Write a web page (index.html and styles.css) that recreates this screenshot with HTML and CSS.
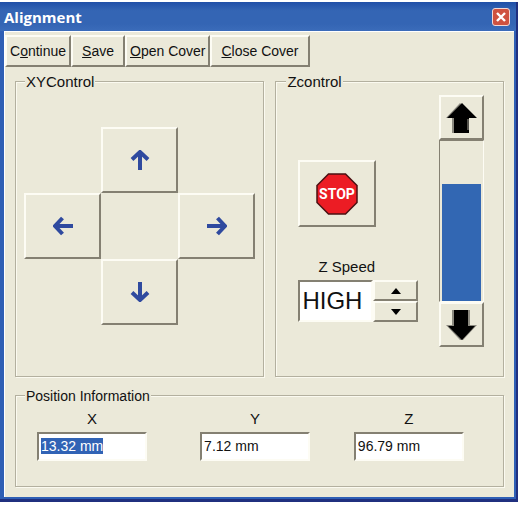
FILE: index.html
```html
<!DOCTYPE html>
<html lang="en">
<head>
    <meta charset="UTF-8">
    <meta name="viewport" content="width=device-width, initial-scale=1.0">
    <title>Alignment</title>
    <link rel="stylesheet" href="styles.css">
</head>
<body>
    <div class="window">
        <div class="titlebar">
            <h1>Alignment</h1>
            <button class="close" aria-label="Close">
                <svg width="10" height="10" viewBox="0 0 10 10"><path d="M1 1L9 9M9 1L1 9" stroke="#fff" stroke-width="2.4"/></svg>
            </button>
        </div>

        <div class="client">
            <div class="toolbar">
                <button class="raised">C<u>o</u>ntinue</button>
                <button class="raised wide"><u>S</u>ave</button>
                <button class="raised"><u>O</u>pen Cover</button>
                <button class="raised wide"><u>C</u>lose Cover</button>
            </div>

            <div class="controls">
                <fieldset class="xy">
                    <legend>XYControl</legend>
                    <div class="pad">
                        <button class="raised up" aria-label="Up">
                            <svg class="arrow" viewBox="0 0 20 20"><path d="M10 20V3M2 9.500L10 2L18 9.500"/></svg>
                        </button>
                        <button class="raised left" aria-label="Left">
                            <svg class="arrow" viewBox="0 0 20 20"><path d="M20 10H3M9.500 2L2 10L9.500 18"/></svg>
                        </button>
                        <button class="raised right" aria-label="Right">
                            <svg class="arrow" viewBox="0 0 20 20"><path d="M0 10H17M10.500 2L18 10L10.500 18"/></svg>
                        </button>
                        <button class="raised down" aria-label="Down">
                            <svg class="arrow" viewBox="0 0 20 20"><path d="M10 0V17M2 10.500L10 18L18 10.500"/></svg>
                        </button>
                    </div>
                </fieldset>

                <fieldset class="z">
                    <legend>Zcontrol</legend>
                    <div class="z-left">
                        <button class="raised stop" aria-label="Stop">
                            <svg width="42" height="42" viewBox="0 0 42 42">
                                <path d="M12.500 1H29.500L41 12.500V29.500L29.500 41H12.500L1 29.500V12.500Z" fill="#ec1c24" stroke="#4a1012" stroke-width="1.500"/>
                                <text class="stop-text" x="21" y="26" text-anchor="middle">STOP</text>
                            </svg>
                        </button>
                        <label for="speed">Z Speed</label>
                        <div class="spinner">
                            <input type="text" id="speed" value="HIGH">
                            <div class="spin-buttons">
                                <button class="raised" aria-label="Faster">
                                    <svg width="10" height="6" viewBox="0 0 10 6"><path d="M5 0L10 6H0Z"/></svg>
                                </button>
                                <button class="raised" aria-label="Slower">
                                    <svg width="10" height="6" viewBox="0 0 10 6"><path d="M0 0H10L5 6Z"/></svg>
                                </button>
                            </div>
                        </div>
                    </div>
                    <div class="z-right">
                        <button class="raised" aria-label="Z up">
                            <svg width="32" height="32" viewBox="0 0 32 32">
                                <path d="M14 1L0 16H6V31H22V16H30Z" fill="#8c8a80"/>
                                <path d="M16 1L1 16H8V31H23V16H31Z"/>
                                <path d="M22 17V28" stroke="#aaa89c"/>
                            </svg>
                        </button>
                        <div class="track" role="meter" aria-label="Z position" aria-valuemin="0" aria-valuemax="100" aria-valuenow="73">
                            <div class="level" style="height: 73%"></div>
                        </div>
                        <button class="raised" aria-label="Z down">
                            <svg width="32" height="32" viewBox="0 0 32 32">
                                <path d="M6 1H24V16H31L17 31H14L0 16H6Z" fill="#8c8a80"/>
                                <path d="M8 1H22V17H29L16 31L2 17H8Z"/>
                            </svg>
                        </button>
                    </div>
                </fieldset>
            </div>

            <fieldset class="position">
                <legend>Position Information</legend>
                <div class="field">
                    <label for="pos_x">X</label>
                    <input type="text" id="pos_x" value="13.32 mm">
                </div>
                <div class="field">
                    <label for="pos_y">Y</label>
                    <input type="text" id="pos_y" value="7.12 mm">
                </div>
                <div class="field">
                    <label for="pos_z">Z</label>
                    <input type="text" id="pos_z" value="96.79 mm">
                </div>
            </fieldset>
        </div>
    </div>

    <script>
        // start with the X position ready to be overwritten
        let posX = document.getElementById("pos_x");
        posX.focus();
        posX.select();
    </script>
</body>
</html>
```
FILE: styles.css
```css
* {
    box-sizing: border-box;
}
body {
    margin: 0;
    padding: 2px 4px 4px 0;
    background-color: #fff;
    font-family: "Liberation Sans", Arial, sans-serif;
    font-size: 14px;
    line-height: 18px;
    color: #111;
}
button, input {
    font: inherit;
    color: inherit;
}
svg {
    display: block;
}
.window {
    background-color: #2f5fb5;
    border-right: 2px solid #20307f;
    border-bottom: 3px solid #20307f;
    padding: 0 2px 2px 4px;
}
.titlebar {
    display: flex;
    justify-content: space-between;
    align-items: center;
    height: 29px;
    margin: 0 -2px 0 -4px;
    padding: 0 6px 0 4px;
    background: linear-gradient(#1f4fa8, #3465b4 30%, #3465b4 75%, #3b6cba);
}
.titlebar h1 {
    margin: 0;
    font-family: "Open Sans", "Noto Sans", sans-serif;
    font-size: 15px;
    font-weight: bold;
    color: #fff;
}
.close {
    display: flex;
    align-items: center;
    justify-content: center;
    width: 18px;
    height: 18px;
    padding: 0;
    border: 1px solid #f3d8d4;
    border-radius: 3px;
    background-color: #cf5240;
}
.client {
    background-color: #ebe9d9;
    border-left: 1px solid #fff;
    border-top: 1px solid #fff;
    padding: 3px 10px 10px 0;
}
.raised {
    display: flex;
    align-items: center;
    justify-content: center;
    padding: 0;
    background-color: #ebe9d9;
    border: 2px solid;
    border-color: #fdfcf4 #848072 #848072 #fdfcf4;
}
.toolbar {
    display: flex;
}
.toolbar .raised {
    height: 32px;
    padding: 0 3px;
}
.toolbar .wide {
    padding: 0 9px;
}
.controls {
    display: flex;
    gap: 11px;
    margin: 5px 0 9px 10px;
}
fieldset {
    min-width: 0;
    margin: 0;
    border: 1px solid #b3b09f;
    box-shadow: 1px 1px 0 #fbfaf0, inset 1px 1px 0 #fbfaf0;
}
legend {
    margin-left: 9px;
    padding: 2px 1px 0;
    line-height: 16px;
    background-color: #ebe9d9;
}
.controls legend, .controls label, .field label {
    font-size: 15px;
}
.xy {
    width: 51%;
    flex: none;
    padding: 37px 0 51px;
}
.pad {
    display: grid;
    grid-template-columns: repeat(3, 77px);
    grid-template-rows: repeat(3, 66px);
    grid-template-areas: ". up ." "left . right" ". down .";
    justify-content: center;
}
.up {
    grid-area: up;
}
.left {
    grid-area: left;
}
.right {
    grid-area: right;
}
.down {
    grid-area: down;
}
.arrow {
    width: 20px;
    height: 20px;
    fill: none;
    stroke: #2f4a9f;
    stroke-width: 4;
}
.z {
    display: flex;
    flex: 1;
    justify-content: space-between;
    padding: 5px 19px 29px 22px;
}
.z legend, .position legend {
    margin-left: -12px;
}
.z-left {
    display: flex;
    flex-direction: column;
    padding-top: 65px;
}
.stop {
    width: 78px;
    height: 67px;
}
.stop-text {
    font-family: Roboto, "Liberation Sans", sans-serif;
    font-size: 14px;
    font-weight: bold;
    fill: #fff;
}
.z-left label {
    margin: 31px 0 4px 20px;
}
.spinner {
    display: flex;
}
.spinner input, .field input {
    background-color: #fff;
    border: 2px solid;
    border-color: #848072 #fdfcf4 #fdfcf4 #848072;
    border-radius: 0;
    outline: none;
}
.spinner input {
    width: 75px;
    height: 42px;
    padding: 0 2px;
    font-size: 24px;
}
.spin-buttons {
    display: flex;
    flex-direction: column;
    width: 45px;
}
.spin-buttons .raised {
    flex: 1;
}
.z-right {
    display: flex;
    flex-direction: column;
    width: 45px;
}
.z-right .raised {
    height: 45px;
}
.track {
    display: flex;
    flex: 1;
    min-height: 162px;
    align-items: flex-end;
    padding: 0 2px;
    border: 1px solid;
    border-color: #848072 #fdfcf4 #fdfcf4 #848072;
}
.level {
    width: 100%;
    background-color: #3267b3;
}
.position {
    display: grid;
    grid-template-columns: 35% 33% 1fr;
    margin-left: 10px;
    padding: 6px 0 25px 21px;
}
.field {
    display: flex;
    flex-direction: column;
    width: 110px;
}
.field label {
    text-align: center;
}
.field input {
    width: 100%;
    height: 29px;
    margin-top: 4px;
    padding: 0 2px 1px;
}
input::selection {
    background-color: #3163b5;
    color: #fff;
}
```
